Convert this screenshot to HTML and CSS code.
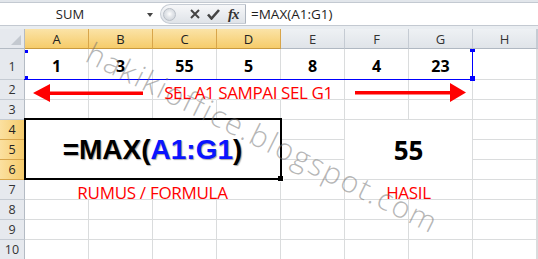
FILE: index.html
```html
<!DOCTYPE html>
<html lang="id">
<head>
    <meta charset="UTF-8">
    <meta name="viewport" content="width=device-width, initial-scale=1.0">
    <title>Rumus MAX</title>
    <link rel="stylesheet" href="styles.css">
</head>
<body>
    <!-- Formula bar -->
    <div class="fbar">
        <div class="fbar-top"></div>
        <div class="fbar-main">
            <div class="namebox">
                <span class="name">SUM</span>
                <span class="caret"></span>
            </div>
            <div class="fbtns">
                <span class="grip"></span>
                <svg class="ico-x" width="10" height="10" viewBox="0 0 10 10"><path d="M1 1 L9 9 M9 1 L1 9" /></svg>
                <svg class="ico-ok" width="13" height="11" viewBox="0 0 13 11"><path d="M1 5.5 L4.5 9.5 L12 1" /></svg>
                <span class="fx">fx</span>
            </div>
            <div class="finput">=MAX(A1:G1)</div>
        </div>
        <div class="fbar-gap"></div>
    </div>

    <!-- Sheet -->
    <div class="sheet">
        <div class="corner"><span class="tri"></span></div>
        <div class="ch on">A</div>
        <div class="ch on">B</div>
        <div class="ch on">C</div>
        <div class="ch on">D</div>
        <div class="ch">E</div>
        <div class="ch">F</div>
        <div class="ch">G</div>
        <div class="ch">H</div>
        <div class="ch"></div>

        <div class="rh tall">1</div>
        <div class="c num">1</div>
        <div class="c num">3</div>
        <div class="c num">55</div>
        <div class="c num">5</div>
        <div class="c num">8</div>
        <div class="c num">4</div>
        <div class="c num">23</div>
        <div class="c"></div>
        <div class="c"></div>

        <div class="rh">2</div>
        <div class="c"></div>
        <div class="c"></div>
        <div class="c nob"></div>
        <div class="c nob label front"><span>SEL A1 SAMPAI SEL G1</span></div>
        <div class="c"></div>
        <div class="c"></div>
        <div class="c"></div>
        <div class="c"></div>
        <div class="c"></div>

        <div class="rh">3</div>
        <div class="c"></div>
        <div class="c"></div>
        <div class="c"></div>
        <div class="c"></div>
        <div class="c"></div>
        <div class="c"></div>
        <div class="c"></div>
        <div class="c"></div>
        <div class="c"></div>

        <div class="rh on">4</div>
        <div class="c merged-formula">=MAX(<span class="ref">A1:G1</span>)</div>
        <div class="c"></div>
        <div class="c merged-result">55</div>
        <div class="c"></div>
        <div class="c"></div>

        <div class="rh on">5</div>
        <div class="c"></div>
        <div class="c"></div>
        <div class="c"></div>

        <div class="rh on">6</div>
        <div class="c"></div>
        <div class="c"></div>
        <div class="c"></div>

        <div class="rh">7</div>
        <div class="c label-rumus">RUMUS / FORMULA</div>
        <div class="c"></div>
        <div class="c label-hasil">HASIL</div>
        <div class="c"></div>
        <div class="c"></div>

        <div class="rh">8</div>
        <div class="c"></div>
        <div class="c"></div>
        <div class="c"></div>
        <div class="c"></div>
        <div class="c"></div>
        <div class="c"></div>
        <div class="c"></div>
        <div class="c"></div>
        <div class="c"></div>

        <div class="rh">9</div>
        <div class="c"></div>
        <div class="c"></div>
        <div class="c"></div>
        <div class="c"></div>
        <div class="c"></div>
        <div class="c"></div>
        <div class="c"></div>
        <div class="c"></div>
        <div class="c"></div>

        <div class="rh">10</div>
        <div class="c"></div>
        <div class="c"></div>
        <div class="c"></div>
        <div class="c"></div>
        <div class="c"></div>
        <div class="c"></div>
        <div class="c"></div>
        <div class="c"></div>
        <div class="c"></div>

        <!-- overlays -->
        <svg class="arrows" width="440" height="24" viewBox="0 0 440 24">
            <polygon points="3,12 20,3 20,10.5 113,10.5 113,14 20,14 20,21" />
            <polygon points="325,10 420,10 420,2 436,11.5 420,21 420,13.5 325,13.5" />
        </svg>

        <div class="range">
            <span class="h tl"></span>
            <span class="h bl"></span>
            <span class="h tr"></span>
            <span class="h br"></span>
        </div>

        <div class="selection"><span class="handle"></span></div>
    </div>

    <div class="watermark">hakikioffice.blogspot.com</div>
</body>
</html>
```

FILE: styles.css
```css
body {
    margin: 0;
    width: 538px;
    height: 259px;
    overflow: hidden;
    background: #fff;
    font-family: "Open Sans", sans-serif;
    position: relative;
}

/* formula bar */

.fbar-top {
    height: 2px;
    background: #e2e6eb;
}

.fbar-main {
    height: 24px;
    box-sizing: border-box;
    border-top: 1px solid #c3c9d1;
    border-bottom: 1px solid #c3c9d1;
    display: flex;
    align-items: center;
    background: #fff;
}

.fbar-gap {
    height: 3px;
    background: #e9edf1;
}

.namebox {
    width: 160px;
    height: 100%;
    display: flex;
    align-items: center;
    position: relative;
}

.namebox .name {
    width: 140px;
    text-align: center;
    font-size: 13px;
    color: #1e1e1e;
}

.namebox .caret {
    width: 0;
    height: 0;
    border-left: 3.5px solid transparent;
    border-right: 3.5px solid transparent;
    border-top: 4px solid #444;
    margin-left: 7px;
    margin-top: 1px;
}

.fbtns {
    width: 86px;
    height: 20px;
    box-sizing: border-box;
    display: flex;
    align-items: center;
    background: linear-gradient(#f6f7f9, #dfe3e8);
    border: 1px solid #c6ccd4;
    border-right: 1px solid #aeb5bf;
    border-radius: 11px 0 0 11px;
    padding-left: 2px;
}

.grip {
    width: 13px;
    height: 13px;
    box-sizing: border-box;
    border-radius: 50%;
    background: radial-gradient(circle at 50% 45%, #fff 0, #e3e6ea 40%, #c9ced5 100%);
    border: 1px solid #b9bfc7;
}

.ico-x {
    margin-left: 14px;
}

.ico-x path {
    stroke: #444;
    stroke-width: 2;
    fill: none;
}

.ico-ok {
    margin-left: 7px;
}

.ico-ok path {
    stroke: #444;
    stroke-width: 2.6;
    fill: none;
}

.fx {
    margin-left: 8px;
    font-family: "Liberation Serif", serif;
    font-style: italic;
    font-weight: bold;
    font-size: 15px;
    color: #333;
    letter-spacing: -1px;
}

.finput {
    padding-left: 5px;
    font-size: 13.5px;
    color: #1e1e1e;
}

/* sheet */

.sheet {
    position: relative;
    display: grid;
    grid-template-columns: 25px repeat(8, 64px) 1fr;
    grid-template-rows: 20px 31px repeat(9, 20px);
    background: #fff;
}

.corner {
    background: #e6e9ee;
    border-right: 1px solid #b4bbc4;
    border-bottom: 1px solid #b4bbc4;
    position: relative;
}

.corner .tri {
    position: absolute;
    right: 3px;
    bottom: 3px;
    width: 0;
    height: 0;
    border-left: 10px solid transparent;
    border-bottom: 10px solid #c4c9d0;
}

.ch {
    display: flex;
    align-items: center;
    justify-content: center;
    font-size: 13px;
    color: #333;
    background: linear-gradient(#eef1f4, #e0e4e9);
    border-right: 1px solid #c5cbd3;
    border-bottom: 1px solid #b0b8c2;
}

.ch.on {
    background: linear-gradient(#fbe3a7, #f6cc6a);
    border-right: 1px solid #d8a54a;
    border-bottom: 1px solid #c99a3e;
    color: #222;
}

.rh {
    display: flex;
    align-items: flex-end;
    justify-content: center;
    padding-bottom: 1px;
    font-size: 12.5px;
    line-height: 17px;
    color: #333;
    background: #e6e9ee;
    border-right: 1px solid #b4bbc4;
    border-bottom: 1px solid #c5cbd3;
}

.rh.tall {
    padding-bottom: 4px;
}

.rh.on {
    background: linear-gradient(90deg, #fbe0a0, #f5cb6c);
    border-right: 1px solid #d8a54a;
    border-bottom: 1px solid #d8a54a;
    color: #222;
}

.c {
    border-right: 1px solid #dadcdd;
    border-bottom: 1px solid #dadcdd;
    min-width: 0;
}

.c.nob {
    border-right-color: transparent;
}

.num {
    display: flex;
    align-items: flex-end;
    justify-content: center;
    padding-bottom: 3px;
    font-size: 16px;
    line-height: 20px;
    font-weight: bold;
    color: #000;
}

.label {
    display: flex;
    justify-content: center;
    padding-top: 3px;
    white-space: nowrap;
    overflow: visible;
    font-size: 17px;
    line-height: 20px;
    letter-spacing: -0.4px;
    color: #ff0000;
}

.front {
    z-index: 1;
}

.merged-formula {
    grid-column: 2 / span 4;
    grid-row: 5 / span 3;
    display: flex;
    align-items: center;
    justify-content: center;
    font-family: "Liberation Sans", Arial, sans-serif;
    font-weight: bold;
    font-size: 28px;
    color: #000;
    text-shadow: 1px 1px 1px rgba(0, 0, 0, 0.35);
}

.merged-formula .ref {
    color: #0a14ff;
}

.merged-result {
    grid-column: 7 / span 2;
    grid-row: 5 / span 3;
    display: flex;
    align-items: center;
    justify-content: center;
    font-weight: bold;
    font-size: 26px;
    color: #000;
}

.label-rumus,
.label-hasil {
    grid-row: 8;
    display: flex;
    justify-content: center;
    padding-top: 3px;
    white-space: nowrap;
    font-size: 17px;
    line-height: 20px;
    letter-spacing: -0.3px;
    color: #ff0000;
}

.label-rumus {
    grid-column: 2 / span 4;
}

.label-hasil {
    grid-column: 7 / span 2;
}

/* overlays */

.arrows {
    position: absolute;
    left: 30px;
    top: 52px;
}

.arrows polygon {
    fill: #ff0000;
}

.range {
    position: absolute;
    left: 24px;
    top: 20px;
    width: 449px;
    height: 31px;
    box-sizing: border-box;
    border-right: 1px solid #0000ff;
    border-bottom: 1px solid #0000ff;
}

.range .h {
    position: absolute;
    background: #0000ff;
}

.range .tl {
    left: 1px;
    top: 1px;
    width: 3px;
    height: 3px;
}

.range .bl {
    left: 1px;
    bottom: -1px;
    width: 3px;
    height: 4px;
}

.range .tr {
    right: -3px;
    top: 0;
    width: 5px;
    height: 3px;
}

.range .br {
    right: -3px;
    bottom: -2px;
    width: 5px;
    height: 5px;
}

.selection {
    position: absolute;
    left: 24px;
    top: 89px;
    width: 258px;
    height: 62px;
    box-sizing: border-box;
    border: 2px solid #000;
}

.selection .handle {
    position: absolute;
    right: -4px;
    bottom: -4px;
    width: 5px;
    height: 5px;
    background: #000;
    border: 1px solid #fff;
    border-top: none;
    border-left: none;
}

.watermark {
    position: absolute;
    left: 98px;
    top: 32px;
    font-size: 30px;
    font-weight: 300;
    letter-spacing: 2px;
    color: rgba(110, 110, 110, 0.5);
    white-space: nowrap;
    transform: rotate(26.5deg);
    transform-origin: 0 0;
    pointer-events: none;
}
```
